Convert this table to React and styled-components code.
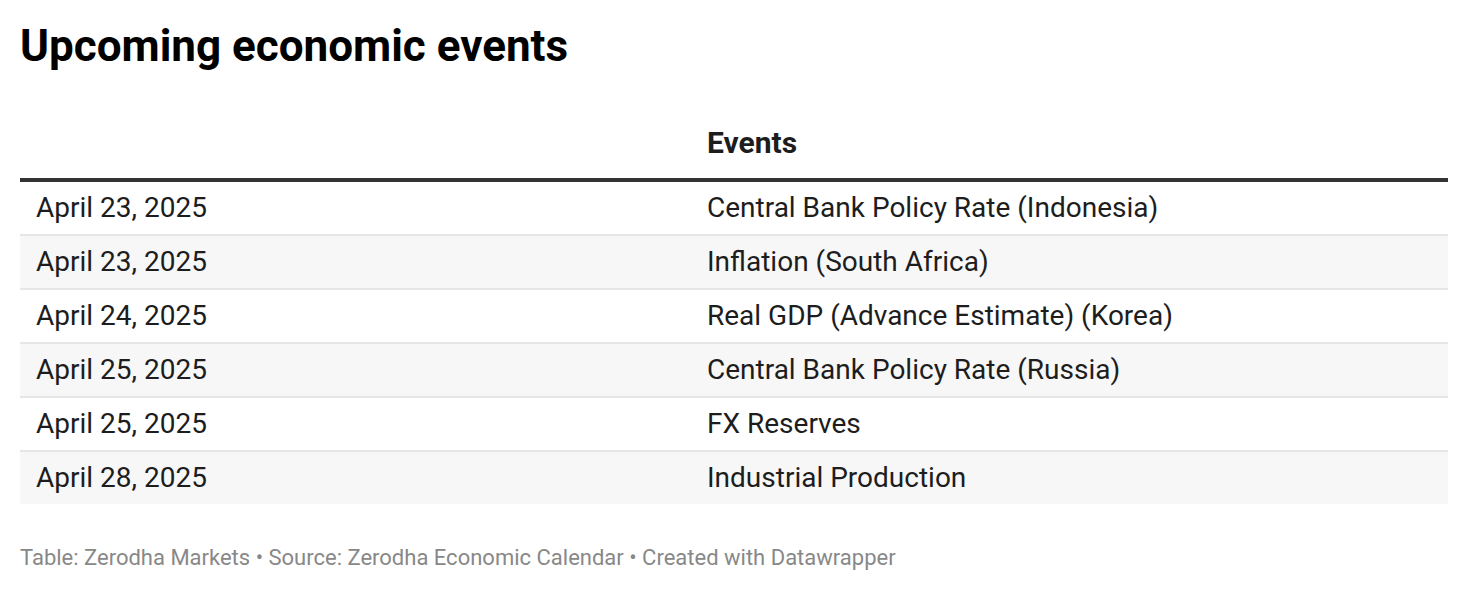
import React from 'react';
import styled, { createGlobalStyle } from 'styled-components';

const events = [
   { date: 'April 23, 2025', name: 'Central Bank Policy Rate (Indonesia)' },
   { date: 'April 23, 2025', name: 'Inflation (South Africa)' },
   { date: 'April 24, 2025', name: 'Real GDP (Advance Estimate) (Korea)' },
   { date: 'April 25, 2025', name: 'Central Bank Policy Rate (Russia)' },
   { date: 'April 25, 2025', name: 'FX Reserves' },
   { date: 'April 28, 2025', name: 'Industrial Production' },
];

const App = () => {
   return (
      <>
         <GlobalStyle />
         <Wrapper>
            <Title>Upcoming economic events</Title>

            <Table>
               <HeadRow>
                  <HeadCell />
                  <HeadCell>Events</HeadCell>
               </HeadRow>
               {events.map((ev, i) => (
                  <Row key={i} striped={i % 2 === 1} last={i === events.length - 1}>
                     <Cell>{ev.date}</Cell>
                     <Cell>{ev.name}</Cell>
                  </Row>
               ))}
            </Table>

            <Footer>Table: Zerodha Markets • Source: Zerodha Economic Calendar • Created with Datawrapper</Footer>
         </Wrapper>
      </>
   );
};

export default App;

const GlobalStyle = createGlobalStyle`
   * {
      box-sizing: border-box;
   }

   body {
      margin: 0;
      background: #ffffff;
      font-family: Roboto, 'Liberation Sans', sans-serif;
   }
`;

const Wrapper = styled.div`
   display: flex;
   flex-direction: column;
   padding: 14px 20px 0;
   width: 1468px;
`;

const Title = styled.h1`
   margin: 0;
   font-size: 44px;
   line-height: 64px;
   font-weight: 700;
   color: #000000;
`;

const Table = styled.div`
   display: flex;
   flex-direction: column;
   margin-top: 48px;
`;

const HeadRow = styled.div`
   display: grid;
   grid-template-columns: 671px 1fr;
   border-bottom: 4px solid #333333;
`;

const HeadCell = styled.div`
   padding: 0 16px 18px;
   font-size: 30px;
   line-height: 34px;
   font-weight: 700;
   color: #1d1d1d;
`;

const Row = styled.div`
   display: grid;
   grid-template-columns: 671px 1fr;
   align-items: center;
   height: ${({ last }) => (last ? '52px' : '54px')};
   background-color: ${({ striped }) => (striped ? '#f7f7f7' : '#ffffff')};
   border-bottom: ${({ last }) => (last ? 'none' : '2px solid #e6e6e6')};
`;

const Cell = styled.div`
   padding: 0 16px;
   font-size: 28px;
   line-height: 34px;
   color: #1d1d1d;
`;

const Footer = styled.div`
   margin-top: 40px;
   font-size: 22px;
   line-height: 28px;
   color: #888888;
`;
